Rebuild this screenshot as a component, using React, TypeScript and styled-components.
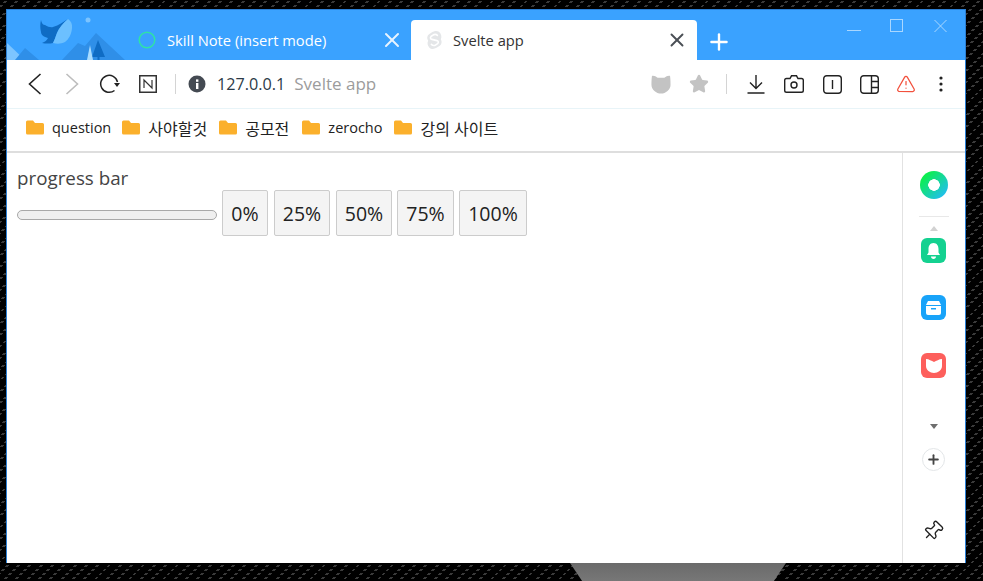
import styled, { createGlobalStyle } from "styled-components";
import { X, Plus, TriangleAlert, Star, Pin } from "lucide-react";

const GlobalStyle = createGlobalStyle`
  html, body { margin: 0; padding: 0; }
  body { width: 983px; height: 581px; overflow: hidden; background: #000; }
`;

const Desktop = styled.div`
  position: relative;
  box-sizing: border-box;
  width: 983px;
  height: 581px;
  padding: 9px 17px 18px 6px;
  background:
    repeating-linear-gradient(0deg, #000 0 2px, transparent 2px 4px),
    repeating-linear-gradient(135deg, #000 0 4px, #3a3a3a 4px 6px, #000 6px 8px);
  font-family: "Open Sans", "Noto Sans", "Noto Sans CJK KR", sans-serif;
`;

const Dock = styled.div`
  position: absolute;
  left: 570px;
  bottom: 0;
  width: 216px;
  height: 18px;
  background: linear-gradient(#6a6a6a, #777);
  clip-path: polygon(0 0, 100% 0, 94.4% 100%, 5.6% 100%);
`;

const Browser = styled.div`
  position: relative;
  box-sizing: border-box;
  height: 554px;
  display: flex;
  flex-direction: column;
  background: #fff;
  border: 1px solid #2b80d6;
  border-bottom: 0;
`;

const TabBar = styled.div`
  flex: 0 0 50px;
  display: flex;
  align-items: flex-end;
  background: #3aa2ff;
`;

const Art = styled.svg`
  flex: 0 0 123px;
  width: 123px;
  height: 50px;
  align-self: flex-end;
`;

const Tab = styled.div<{ $active?: boolean }>`
  box-sizing: border-box;
  height: 40px;
  width: ${(p) => (p.$active ? 286 : 281)}px;
  display: flex;
  align-items: center;
  padding: 0 ${(p) => (p.$active ? 9 : 7)}px 0 ${(p) => (p.$active ? 15 : 7)}px;
  border-radius: 4px 4px 0 0;
  background: ${(p) => (p.$active ? "#fff" : "transparent")};
  color: ${(p) => (p.$active ? "#333" : "#fff")};
  font-size: 14.7px;
`;

const TabTitle = styled.span`
  flex: 1;
  margin-left: 10px;
  padding-bottom: 1px;
  white-space: nowrap;
`;

const NewTab = styled.div`
  box-sizing: border-box;
  height: 40px;
  padding-top: 3px;
  margin-left: 9px;
  display: flex;
  align-items: center;
  color: #fff;
`;

const WindowControls = styled.div`
  margin-left: auto;
  align-self: flex-start;
  display: flex;
  align-items: flex-start;
  gap: 29px;
  padding: 9px 18px 0 0;
  color: #a9d7ff;
`;

const Toolbar = styled.div`
  flex: 0 0 48px;
  display: flex;
  align-items: center;
  padding: 0 15px 0 20px;
  border-bottom: 1px solid #e8f4f8;
`;

const NavIcon = styled.span<{ $w: number; $mr?: number; $ml?: number }>`
  flex: 0 0 ${(p) => p.$w}px;
  width: ${(p) => p.$w}px;
  margin-left: ${(p) => p.$ml ?? 0}px;
  margin-right: ${(p) => p.$mr ?? 0}px;
  display: flex;
  align-items: center;
  justify-content: center;
`;

const Divider = styled.span`
  width: 1px;
  height: 20px;
  background: #d4d4d4;
  flex: none;
`;

const Address = styled.div`
  margin-left: 11px;
  padding-bottom: 2px;
  font-size: 16.2px;
  color: #2c3a47;
  white-space: nowrap;
  flex: 1;

  span {
    margin-left: 9px;
    font-size: 17px;
    color: #9c9c9c;
  }
`;

const Bookmarks = styled.div`
  flex: 0 0 44px;
  box-sizing: border-box;
  display: flex;
  align-items: center;
  padding: 0 0 5px 19px;
  border-bottom: 2px solid #dedede;
`;

const Bookmark = styled.div<{ $gap: number; $ko?: boolean }>`
  display: flex;
  align-items: center;
  margin-right: ${(p) => p.$gap}px;
  font-size: ${(p) => (p.$ko ? 16 : 14.5)}px;
  color: #222;
  white-space: nowrap;

  svg {
    margin-right: 8px;
  }
`;

const Body = styled.div`
  flex: 1;
  display: flex;
  min-height: 0;
`;

const Content = styled.main`
  flex: 1;
  padding: 11px 0 0 10px;
  color: #333;
  font-size: 19.5px;
`;

const Heading = styled.div`
  height: 26px;
  padding-top: 1px;
  margin-bottom: -1px;
  line-height: 26px;
  font-size: 18.8px;
  color: #444;
`;

const Controls = styled.div`
  display: flex;
  align-items: flex-start;
`;

const Track = styled.div`
  box-sizing: border-box;
  width: 200px;
  height: 10px;
  margin: 20px 5px 0 0;
  border: 1px solid #a8a8a8;
  border-radius: 5px;
  background: #efefef;
`;

const PercentButton = styled.button<{ $w: number; $mr: number }>`
  box-sizing: border-box;
  width: ${(p) => p.$w}px;
  height: 46px;
  margin-right: ${(p) => p.$mr}px;
  padding: 0;
  border: 1px solid #ccc;
  border-radius: 2px;
  background: #f4f4f4;
  color: #222;
  font-family: inherit;
  font-size: 19.5px;
`;

const Sidebar = styled.aside`
  flex: 0 0 63px;
  box-sizing: border-box;
  display: flex;
  flex-direction: column;
  align-items: center;
  border-left: 1px solid #e2e2e2;
  padding: 18px 0 21px;
`;

const Ring = styled.div`
  box-sizing: border-box;
  width: 28px;
  height: 28px;
  border-radius: 50%;
  background: radial-gradient(circle at center, #fff 0 5.5px, transparent 6px),
    linear-gradient(135deg, #0cf04a 15%, #20c0e8 85%);
`;

const Rule = styled.div`
  width: 30px;
  height: 1px;
  margin-top: 17px;
  background: #e8e8e8;
`;

const Caret = styled.div<{ $down?: boolean; $color: string; $mt: number }>`
  width: 0;
  height: 0;
  margin-top: ${(p) => p.$mt}px;
  border-left: 4px solid transparent;
  border-right: 4px solid transparent;
  ${(p) => (p.$down ? `border-top: 5px solid ${p.$color};` : `border-bottom: 5px solid ${p.$color};`)}
`;

const AppTile = styled.div<{ $bg: string; $mt: number }>`
  width: 25px;
  height: 25px;
  margin: ${(p) => p.$mt}px 1px 0 0;
  border-radius: 6px;
  background: ${(p) => p.$bg};
  display: flex;
  align-items: center;
  justify-content: center;
`;

const AddButton = styled.div`
  box-sizing: border-box;
  width: 23px;
  height: 23px;
  margin: 19px 1px 0 0;
  border: 1px solid #e3e6e8;
  border-radius: 50%;
  display: flex;
  align-items: center;
  justify-content: center;
  color: #444;
`;

const PinSlot = styled.div`
  margin-top: auto;
  margin-right: 3px;
  color: #222;
  line-height: 0;

  svg {
    transform: rotate(45deg);
  }
`;

const Folder = () => (
  <svg width="18" height="15" viewBox="0 0 18 15">
    <path d="M0 2 a1.5 1.5 0 0 1 1.5-1.5 H7 L9 3 H16.5 A1.5 1.5 0 0 1 18 4.5 V13 A1.5 1.5 0 0 1 16.5 14.5 H1.5 A1.5 1.5 0 0 1 0 13 Z" fill="#fbb02c" />
  </svg>
);

const bookmarks = [
  { label: "question", gap: 11 },
  { label: "사야할것", gap: 12, ko: true },
  { label: "공모전", gap: 13, ko: true },
  { label: "zerocho", gap: 12 },
  { label: "강의 사이트", gap: 0, ko: true },
];

const percents = [
  { label: "0%", w: 46, mr: 6 },
  { label: "25%", w: 56, mr: 6 },
  { label: "50%", w: 56, mr: 5 },
  { label: "75%", w: 57, mr: 5 },
  { label: "100%", w: 68, mr: 0 },
];

export default function App() {
  return (
    <Desktop>
      <GlobalStyle />
      <Browser>
        <TabBar>
          <Art viewBox="0 0 123 50">
            <path d="M0 33 L18 50 H0 Z" fill="#7cc4ff" />
            <path d="M8 50 L18 38 L32 50 Z" fill="#2f8fe8" />
            <path d="M55 50 L71 33 L78 36 L89 23 L118 50 Z" fill="#2f8fe8" />
            <path d="M85 47 L91 30 L98 47 H92.5 V50 H90.5 V47 Z" fill="#0f6cc4" />
            <path d="M80 50 L83 35 L86 50 Z" fill="#a9dcff" />
            <circle cx="81" cy="10" r="2.5" fill="#7cc4ff" />
            <path d="M34 10 C34.5 13 36 15 38 15 C41 17 44 17.5 46 17 C52 15.5 56 12 61 9 C56 13 52 18 50 23 C48.5 27 47.5 30 46 33 C42 34 38 33.5 35 33 C38 32 40 30 41 28 C37 27 34 25 34 22 C33 18 33 14 34 10 Z" fill="#0f6cc4" />
            <path d="M61 9 C64 11 65.5 14 65 18 C64.5 24 62 29 58 32 C54 34 50 34 46 33 C47.5 30 48.5 27 50 23 C52 18 56 13 61 9 Z" fill="#6cc0ff" />
          </Art>
          <Tab>
            <svg width="20" height="20" viewBox="0 0 20 20">
              <circle cx="10" cy="10" r="7.8" fill="none" stroke="#2fe3a5" strokeWidth="1.5" />
            </svg>
            <TabTitle>Skill Note (insert mode)</TabTitle>
            <X size={24} strokeWidth={2} color="#e8f4ff" />
          </Tab>
          <Tab $active>
            <svg width="17" height="20" viewBox="0 0 17 20">
              <path d="M13 1.8 C10.5 0.2 8 1 6 2.3 L3 4.3 C1 5.8 0.6 8.6 2.2 10.8 C1 12.8 1.5 15.6 3.2 17.4 C5.2 19.4 8 19.4 10.5 17.8 L13.8 15.7 C15.8 14.2 16.2 11.4 14.8 9.2 C16 7.2 15.4 3.8 13 1.8 Z" fill="#e4e6e8" />
              <path d="M11.4 5.4 C10 4 8 4.4 6.6 5.4 L5 6.5 C4 7.4 4.4 9 6 9.4 L11 10.6 C12.4 11 12.8 12.6 11.6 13.6 L9.8 14.8 C8.4 15.8 6.6 15.6 5.4 14.4" fill="none" stroke="#fff" strokeWidth="1.6" strokeLinecap="round" />
            </svg>
            <TabTitle>Svelte app</TabTitle>
            <X size={22} strokeWidth={2.1} color="#4a4f55" />
          </Tab>
          <NewTab>
            <Plus size={26} strokeWidth={2.2} />
          </NewTab>
          <WindowControls>
            <svg width="14" height="14" viewBox="0 0 14 14" stroke="currentColor" fill="none" strokeWidth="1">
              <path d="M0 11.5 H14" />
            </svg>
            <svg width="14" height="14" viewBox="0 0 14 14" stroke="currentColor" fill="none" strokeWidth="1">
              <rect x="0.5" y="0.5" width="12" height="12" />
            </svg>
            <svg width="14" height="14" viewBox="0 0 14 14" stroke="currentColor" fill="none" strokeWidth="1">
              <path d="M1.5 1 L13.5 13 M13.5 1 L1.5 13" />
            </svg>
          </WindowControls>
        </TabBar>
        <Toolbar>
          <NavIcon $w={16} $mr={21}>
            <svg width="14" height="22" viewBox="0 0 14 22" fill="none" stroke="#222" strokeWidth="1.6">
              <path d="M12.5 1 L1.5 11 L12.5 21" />
            </svg>
          </NavIcon>
          <NavIcon $w={16} $mr={18}>
            <svg width="14" height="22" viewBox="0 0 14 22" fill="none" stroke="#bdbdbd" strokeWidth="1.6">
              <path d="M1.5 1 L12.5 11 L1.5 21" />
            </svg>
          </NavIcon>
          <NavIcon $w={24} $mr={17}>
            <svg width="22" height="20" viewBox="0 0 22 20" fill="none">
              <path d="M15.5 16.5 A8.5 8.5 0 1 1 18.5 8" stroke="#222" strokeWidth="1.5" />
              <path d="M15 9 H21 L18 13 Z" fill="#222" />
            </svg>
          </NavIcon>
          <NavIcon $w={18} $mr={18}>
            <svg width="18" height="18" viewBox="0 0 18 18" fill="none" stroke="#333">
              <rect x="0.75" y="0.75" width="16.5" height="16.5" strokeWidth="1.5" />
              <path d="M5 13 V5 L13 13 V5" strokeWidth="1.2" />
            </svg>
          </NavIcon>
          <Divider />
          <NavIcon $w={18} $ml={12}>
            <svg width="18" height="18" viewBox="0 0 18 18">
              <circle cx="9" cy="9" r="8.5" fill="#444a52" />
              <rect x="8" y="8" width="2.4" height="6" fill="#fff" />
              <rect x="8" y="4.4" width="2.4" height="2.4" fill="#fff" />
            </svg>
          </NavIcon>
          <Address>
            127.0.0.1<span>Svelte app</span>
          </Address>
          <NavIcon $w={20} $mr={18}>
            <svg width="21" height="20" viewBox="0 0 21 20">
              <path d="M1 1.5 C4 1 6 3 7 3.5 H14 C15 3 17 1 20 1.5 C20.5 5 20.5 9 20.5 11 C20.5 16 15.5 20 10.5 20 C5.5 20 0.5 16 0.5 11 C0.5 9 0.5 5 1 1.5 Z" fill="#c3c3c3" />
            </svg>
          </NavIcon>
          <NavIcon $w={20} $mr={17}>
            <Star size={24} fill="#c3c3c3" color="#c3c3c3" />
          </NavIcon>
          <Divider />
          <NavIcon $w={18} $mr={19} $ml={20}>
            <svg width="18" height="20" viewBox="0 0 18 20" fill="none" stroke="#222" strokeWidth="1.4">
              <path d="M9 1 V14 M3 8.5 L9 14.5 L15 8.5 M0.5 19 H17.5" />
            </svg>
          </NavIcon>
          <NavIcon $w={20} $mr={18}>
            <svg width="20" height="18" viewBox="0 0 20 18" fill="none" stroke="#222" strokeWidth="1.4">
              <path d="M2.5 3.5 H6 L7.5 0.8 H12.5 L14 3.5 H17.5 A1.8 1.8 0 0 1 19.3 5.3 V15.5 A1.8 1.8 0 0 1 17.5 17.3 H2.5 A1.8 1.8 0 0 1 0.7 15.5 V5.3 A1.8 1.8 0 0 1 2.5 3.5 Z" />
              <circle cx="10" cy="10" r="3" />
            </svg>
          </NavIcon>
          <NavIcon $w={20} $mr={18}>
            <svg width="19" height="19" viewBox="0 0 19 19" fill="none" stroke="#222" strokeWidth="1.4">
              <rect x="0.7" y="0.7" width="17.6" height="17.6" rx="3" />
              <path d="M9.5 5 V14" />
            </svg>
          </NavIcon>
          <NavIcon $w={19} $mr={17}>
            <svg width="19" height="19" viewBox="0 0 19 19" fill="none" stroke="#222" strokeWidth="1.4">
              <rect x="0.7" y="0.7" width="17.6" height="17.6" rx="3" />
              <path d="M11.5 1 V18 M11.5 6.5 H18 M11.5 12.5 H18" />
            </svg>
          </NavIcon>
          <NavIcon $w={20} $mr={16}>
            <TriangleAlert size={24} strokeWidth={1.5} color="#f2503c" />
          </NavIcon>
          <NavIcon $w={18}>
            <svg width="4" height="16" viewBox="0 0 4 16" fill="#222">
              <circle cx="2" cy="2" r="1.6" />
              <circle cx="2" cy="8" r="1.6" />
              <circle cx="2" cy="14" r="1.6" />
            </svg>
          </NavIcon>
        </Toolbar>
        <Bookmarks>
          {bookmarks.map((b) => (
            <Bookmark key={b.label} $gap={b.gap} $ko={b.ko}>
              <Folder />
              {b.label}
            </Bookmark>
          ))}
        </Bookmarks>
        <Body>
          <Content>
            <Heading>progress bar</Heading>
            <Controls>
              <Track />
              {percents.map((p) => (
                <PercentButton key={p.label} $w={p.w} $mr={p.mr}>
                  {p.label}
                </PercentButton>
              ))}
            </Controls>
          </Content>
          <Sidebar>
            <Ring />
            <Rule />
            <Caret $color="#d2d2d2" $mt={9} />
            <AppTile $bg="#14d190" $mt={7}>
              <svg width="15" height="16" viewBox="0 0 15 16" fill="#fff">
                <path d="M7.5 0 C4 0 2.5 3 2.5 6 V9.5 L1 12 H14 L12.5 9.5 V6 C12.5 3 11 0 7.5 0 Z" />
                <path d="M5 13.5 H10 C10 15 9 16 7.5 16 C6 16 5 15 5 13.5 Z" />
              </svg>
            </AppTile>
            <AppTile $bg="#18a3f9" $mt={32}>
              <svg width="15" height="14" viewBox="0 0 15 14" fill="#fff">
                <path d="M2 0 H13 L15 4 H0 Z" />
                <path d="M0 5 H15 V12 A2 2 0 0 1 13 14 H2 A2 2 0 0 1 0 12 Z M5 7 V8.4 H10 V7 Z" fillRule="evenodd" />
              </svg>
            </AppTile>
            <AppTile $bg="#fd5f5c" $mt={33}>
              <svg width="16" height="14" viewBox="0 0 16 14" fill="#fff">
                <path d="M0 0 C3 0 5.5 2 8 3 C10.5 2 13 0 16 0 V7 C16 11 12 14 8 14 C4 14 0 11 0 7 Z" />
              </svg>
            </AppTile>
            <Caret $down $color="#6e6e6e" $mt={46} />
            <AddButton>
              <Plus size={15} strokeWidth={3} />
            </AddButton>
            <PinSlot>
              <Pin size={22} strokeWidth={1.5} />
            </PinSlot>
          </Sidebar>
        </Body>
      </Browser>
      <Dock />
    </Desktop>
  );
}
